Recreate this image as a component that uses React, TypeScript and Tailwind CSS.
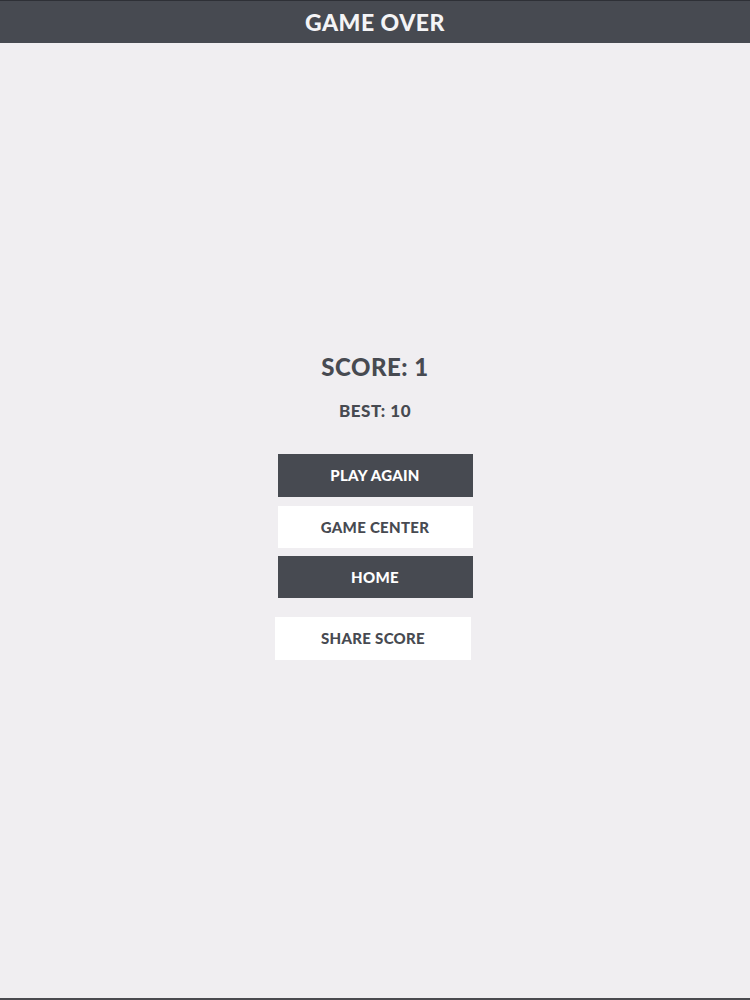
export default function App() {
  const font = { fontFamily: "Lato, 'Noto Sans', sans-serif" };
  return (
    <div className="w-[750px] h-[1000px] bg-[#f0eef1] flex flex-col" style={font}>
      <div className="h-[43px] bg-[#474a51] border-t border-[#2e3036] flex items-center justify-center shrink-0">
        <span className="text-[#f4f4f6] text-[23px] font-black tracking-[0.5px]">GAME OVER</span>
      </div>
      <div className="flex-1 flex flex-col items-center">
        <div className="h-[310px] shrink-0" />
        <div className="text-[#474a51] text-[24px] font-black leading-[28px] tracking-[0.5px]">SCORE: 1</div>
        <div className="mt-[20px] text-[#474a51] text-[17px] font-black leading-[20px] tracking-[0.5px]">BEST: 10</div>
        <div className="mt-[33px] flex flex-col items-center">
          <div className="w-[195px] h-[43px] bg-[#474a51] flex items-center justify-center text-white text-[15px] font-black tracking-[0.3px]">PLAY AGAIN</div>
          <div className="mt-[9px] w-[195px] h-[42px] bg-white flex items-center justify-center text-[#474a51] text-[15px] font-black tracking-[0.3px]">GAME CENTER</div>
          <div className="mt-[8px] w-[195px] h-[42px] bg-[#474a51] flex items-center justify-center text-white text-[15px] font-black tracking-[0.3px]">HOME</div>
          <div className="mt-[19px] -ml-[4px] w-[196px] h-[43px] bg-white flex items-center justify-center text-[#474a51] text-[15px] font-black tracking-[0.3px]">SHARE SCORE</div>
        </div>
      </div>
      <div className="h-[2px] bg-[#4a4a4f] shrink-0" />
    </div>
  );
}
